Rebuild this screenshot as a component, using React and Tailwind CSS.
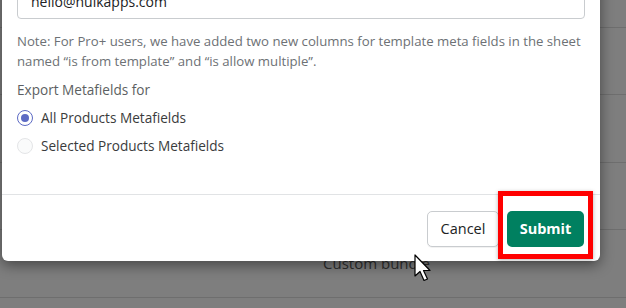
import React from "react";

export default function App() {
  const font = { fontFamily: '"Open Sans", "Noto Sans", sans-serif' };
  return (
    <div className="relative w-[626px] h-[308px] overflow-hidden bg-[#7e7e7e]" style={font}>
      {/* background page rows (dimmed) */}
      <div className="flex flex-col">
        <div className="h-[28px] border-b border-[#6e6e6e]" />
        <div className="h-[67px] border-b border-[#6e6e6e]" />
        <div className="h-[68px] border-b border-[#6e6e6e]" />
        <div className="h-[67px] border-b border-[#6e6e6e]" />
        <div className="h-[68px] border-b border-[#6e6e6e] flex items-center pl-[323px] text-[15px] text-[#2e2e2e]">
          Custom bundle
        </div>
      </div>

      {/* modal */}
      <div className="absolute left-[2px] top-[-33px] w-[598px] h-[294px] bg-white rounded-b-[6px] shadow-[0_4px_14px_rgba(0,0,0,0.45)] flex flex-col">
        <div className="px-[15px] pt-[16px] flex-1">
          <div className="h-[36px] border border-[#c9cccf] rounded-[4px] flex items-center px-[13px] text-[14px] text-[#202223]">
            hello@hulkapps.com
          </div>
          <p className="mt-[12px] text-[13.2px] leading-[20px] text-[#6d7175]">
            Note: For Pro+ users, we have added two new columns for template meta fields in the sheet named “is from template” and “is allow multiple”.
          </p>
          <div className="mt-[9px] text-[13.6px] leading-[20px] text-[#5c5f62]">Export Metafields for</div>
          <div className="mt-[8px] flex flex-col gap-[8px]">
            <label className="flex items-center gap-[8px] h-[20px] text-[13.6px] text-[#3a3b3c]">
              <span className="w-[16px] h-[16px] rounded-full border-[1.5px] border-[#5c6ac4] flex items-center justify-center">
                <span className="w-[8px] h-[8px] rounded-full bg-[#5c6ac4]" />
              </span>
              All Products Metafields
            </label>
            <label className="flex items-center gap-[8px] h-[20px] text-[13.6px] text-[#3a3b3c]">
              <span className="w-[16px] h-[16px] rounded-full border border-[#e4e5e7] bg-[#fafbfb]" />
              Selected Products Metafields
            </label>
          </div>
        </div>
        <div className="border-t border-[#e1e3e5] h-[67px] flex items-start justify-end gap-[8px] pt-[16px] pr-[16px]">
          <button className="h-[36px] w-[72px] rounded-[5px] border border-[#c9cccf] bg-white text-[14.5px] text-[#202223] font-medium shadow-[0_1px_0_rgba(0,0,0,0.05)]">
            Cancel
          </button>
          <button className="h-[36px] w-[77px] rounded-[5px] bg-[#008060] text-white text-[14.5px] font-bold">
            Submit
          </button>
        </div>
      </div>

      {/* red highlight box */}
      <div className="absolute left-[498px] top-[191px] w-[95px] h-[68px] border-[5px] border-[#ff0000] shadow-[0_1px_4px_rgba(0,0,0,0.3)]" />

      {/* cursor */}
      <svg className="absolute left-[414px] top-[254px]" width="20" height="30" viewBox="0 0 20 30">
        <path d="M1 1 L1 22 L6 17.5 L10 26.5 L13.5 25 L9.5 16.5 L16 16.5 Z" fill="white" stroke="black" strokeWidth="1.2" strokeLinejoin="round" />
      </svg>
    </div>
  );
}
